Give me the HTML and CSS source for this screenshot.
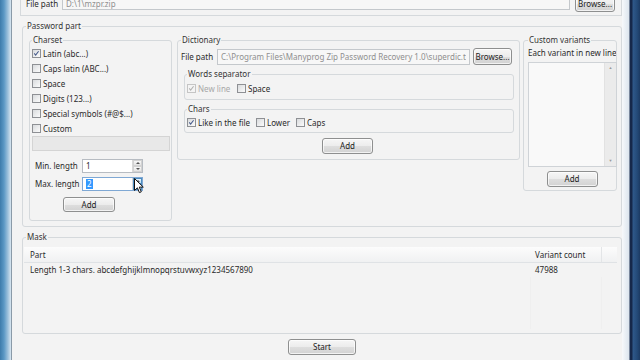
FILE: index.html
```html
<!DOCTYPE html>
<html lang="en">
<head>
    <meta charset="UTF-8">
    <title>Zip Password Recovery</title>
    <link rel="stylesheet" href="styles.css">
</head>
<body>
    <div class="window">
        <div class="frame-left"></div>
        <div class="main">
            <div class="filebox">
                <div class="filerow">
                    <span class="label path-label">File path</span>
                    <input class="text readonly top-path" type="text" value="D:\1\mzpr.zip" readonly>
                    <button class="btn browse">Browse...</button>
                </div>
            </div>

            <fieldset class="group password">
                <legend>Password part</legend>
                <div class="password-body">
                    <fieldset class="group charset">
                        <legend class="charset-legend">Charset</legend>
                        <div class="charset-body">
                            <div class="check"><span class="box checked"><svg viewBox="0 0 9 9"><path d="M1.6 4.4 L3.4 6.6 L7.2 1.6" /></svg></span>Latin (abc...)</div>
                            <div class="check"><span class="box"></span>Caps latin (ABC...)</div>
                            <div class="check"><span class="box"></span>Space</div>
                            <div class="check"><span class="box"></span>Digits (123...)</div>
                            <div class="check"><span class="box"></span>Special symbols (#@$...)</div>
                            <div class="check"><span class="box"></span>Custom</div>
                            <div class="custom-text"></div>
                            <div class="spinrow">
                                <span class="spin-label">Min. length</span>
                                <div class="spin">
                                    <span class="spin-value">1</span>
                                    <span class="spin-arrows"><span class="arr up"></span><span class="arr down"></span></span>
                                </div>
                            </div>
                            <div class="spinrow second">
                                <span class="spin-label">Max. length</span>
                                <div class="spin focused">
                                    <span class="spin-value"><span class="selected">2</span></span>
                                    <span class="spin-arrows"><span class="arr up hot"></span><span class="arr down hot"></span></span>
                                </div>
                            </div>
                            <button class="btn add charset-add">Add</button>
                        </div>
                    </fieldset>

                    <fieldset class="group dictionary">
                        <legend>Dictionary</legend>
                        <div class="dictionary-body">
                            <div class="dict-row">
                                <span class="label dict-label">File path</span>
                                <input class="text readonly dict-path" type="text" value="C:\Program Files\Manyprog Zip Password Recovery 1.0\superdic.txt" readonly>
                                <button class="btn browse">Browse...</button>
                            </div>
                            <fieldset class="group sub">
                                <legend class="sub-legend">Words separator</legend>
                                <div class="sub-body words">
                                    <div class="check disabled w-newline"><span class="box checked"><svg viewBox="0 0 9 9"><path d="M1.6 4.4 L3.4 6.6 L7.2 1.6" /></svg></span>New line</div>
                                    <div class="check"><span class="box"></span>Space</div>
                                </div>
                            </fieldset>
                            <fieldset class="group sub">
                                <legend class="sub-legend">Chars</legend>
                                <div class="sub-body chars">
                                    <div class="check w-like"><span class="box checked"><svg viewBox="0 0 9 9"><path d="M1.6 4.4 L3.4 6.6 L7.2 1.6" /></svg></span>Like in the file</div>
                                    <div class="check w-lower"><span class="box"></span>Lower</div>
                                    <div class="check"><span class="box"></span>Caps</div>
                                </div>
                            </fieldset>
                            <button class="btn add dict-add">Add</button>
                        </div>
                    </fieldset>

                    <fieldset class="group custom">
                        <legend class="custom-legend">Custom variants</legend>
                        <div class="custom-body">
                            <div class="hint">Each variant in new line</div>
                            <div class="textarea">
                                <div class="scrollbar">
                                    <span class="sarr">&#9650;</span>
                                    <span class="sarr">&#9660;</span>
                                </div>
                            </div>
                            <button class="btn add custom-add">Add</button>
                        </div>
                    </fieldset>
                </div>
            </fieldset>

            <fieldset class="group mask">
                <legend>Mask</legend>
                <div class="mask-body">
                    <div class="list">
                        <div class="list-head">
                            <div class="col-part">Part</div>
                            <div class="col-count">Variant count</div>
                            <div class="col-fill"></div>
                        </div>
                        <div class="list-row">
                            <div class="col-part">Length 1-3 chars. abcdefghijklmnopqrstuvwxyz1234567890</div>
                            <div class="col-count">47988</div>
                            <div class="col-fill"></div>
                        </div>
                        <div class="list-rest">
                            <div class="col-part"></div>
                            <div class="col-count"></div>
                            <div class="col-fill"></div>
                        </div>
                    </div>
                </div>
            </fieldset>

            <button class="btn start">Start</button>
        </div>
        <div class="frame-right"></div>
    </div>

    <svg class="cursor" width="12" height="16" viewBox="0 0 12 16">
        <path d="M0.5 0.5 L0.5 12.5 L3.4 9.8 L5.4 14.6 L7.3 13.8 L5.3 9.1 L9.3 9.1 Z" fill="#fff" stroke="#111" stroke-width="1"/>
    </svg>
</body>
</html>
```

FILE: styles.css
```css
* {
    box-sizing: border-box;
}
html, body {
    margin: 0;
    height: 100%;
    overflow: hidden;
}
body {
    position: relative;
    font-family: "Noto Sans", "Open Sans", sans-serif;
    font-size: 8px;
    line-height: 12px;
    color: #2a2a2a;
    background: #f2f2f2;
}
.window {
    display: flex;
    width: 640px;
    height: 360px;
}
.frame-left {
    width: 12px;
    flex: none;
    background: linear-gradient(to right, #3d7bab 0, #5b98c5 4px, #9fc2dd 8px, #d9e6f0 11px);
    border-right: 1px solid #8a9aa8;
}
.frame-right {
    width: 18px;
    flex: none;
    background: linear-gradient(to right, #f7f9fb 0, #dce5ee 7px, #16284a 8px, #16284a 10px, #2f5889 11px, #244a78 15px, #1c3a63 18px);
}
.main {
    flex: 1;
    display: flex;
    flex-direction: column;
    padding-left: 10px;
    background: #f3f3f3;
}
.main > * {
    flex: none;
}

/* buttons and inputs */
.btn {
    font: inherit;
    color: #222;
    padding: 0;
    border: 1px solid #8e8f8f;
    border-radius: 3px;
    background: linear-gradient(#f6f6f6 0%, #ececec 50%, #dedede 51%, #d2d2d2 100%);
    box-shadow: inset 0 0 0 1px rgba(255, 255, 255, 0.7);
    cursor: pointer;
}
.text {
    font: inherit;
    height: 16px;
    padding: 0 3px;
    border: 1px solid #c4c8cc;
    background: #fff;
    color: #333;
    outline: none;
}
.text.readonly {
    background: #f7f7f7;
    color: #8f8f8f;
}
.label {
    white-space: nowrap;
}

/* top file row */
.filebox {
    height: 16px;
    margin-left: -2px;
    border: 1px solid #d5d9dc;
    border-top: none;
    display: flex;
    align-items: flex-end;
    padding: 0 6px 3px 5px;
}
.filerow {
    flex: 1;
    height: 17px;
    display: flex;
    align-items: center;
}
.path-label {
    width: 36px;
}
.top-path {
    flex: 1;
    height: 12px;
}
.filerow .browse {
    width: 40px;
    height: 17px;
    margin-left: 5px;
}

/* group boxes */
.group {
    margin: 0;
    padding: 0;
    min-width: 0;
    border: 1px solid #d5d9dc;
    border-radius: 3px;
}
legend {
    padding: 0 1px;
    margin-left: 3px;
    height: 12px;
    line-height: 12px;
    color: #333;
}
.password {
    margin-top: 4px;
}
.password-body {
    display: flex;
    align-items: flex-start;
    padding: 2px 4px 5px 6px;
}

/* charset */
.charset {
    width: 143px;
    flex: none;
}
.charset-legend {
    margin-left: 2px;
}
.charset-body {
    display: flex;
    flex-direction: column;
    padding: 0 1px 8px 2px;
}
.check {
    display: flex;
    align-items: center;
    height: 15px;
    white-space: nowrap;
}
.box {
    width: 9px;
    height: 9px;
    margin-right: 2px;
    flex: none;
    border: 1px solid #8e9094;
    background: linear-gradient(135deg, #d9dbdd, #fbfbfb);
}
.box svg {
    display: block;
    width: 7px;
    height: 7px;
}
.box path {
    fill: none;
    stroke: #45598a;
    stroke-width: 1.3;
}
.check.disabled {
    color: #a8a8a8;
}
.check.disabled .box {
    border-color: #c5c5c5;
    background: #f4f4f4;
}
.check.disabled path {
    stroke: #b0b0b0;
}
.custom-text {
    height: 15px;
    background: #e8e8e8;
    border: 1px solid #d4d4d4;
}
.spinrow {
    display: flex;
    align-items: center;
    height: 14px;
    margin-top: 8px;
    padding-left: 3px;
}
.spinrow.second {
    margin-top: 4px;
}
.spin-label {
    width: 47px;
    white-space: nowrap;
}
.spin {
    width: 61px;
    height: 14px;
    display: flex;
    border: 1px solid #b7bcc2;
    background: #fff;
}
.spin.focused {
    border-color: #7fa8d4;
}
.spin-value {
    flex: 1;
    padding-left: 3px;
    line-height: 12px;
}
.selected {
    display: inline-block;
    background: #3399ff;
    color: #fff;
    padding: 0 1px;
    line-height: 10px;
}
.spin-arrows {
    width: 10px;
    display: flex;
    flex-direction: column;
    border-left: 1px solid #d8d8d8;
}
.arr {
    flex: 1;
    position: relative;
    background: linear-gradient(#f7f7f7, #e4e4e4);
    border: 1px solid #d2d2d2;
}
.arr.hot {
    background: linear-gradient(#e8f4fc, #b9ddf6);
    border-color: #4d8cc0;
}
.arr::after {
    content: "";
    position: absolute;
    left: 2px;
    top: 1px;
    border-left: 2px solid transparent;
    border-right: 2px solid transparent;
}
.arr.up::after {
    border-bottom: 2px solid #555;
}
.arr.down::after {
    border-top: 2px solid #555;
}
.charset-add {
    width: 52px;
    height: 15px;
    margin: 6px 0 0 31px;
}

/* dictionary */
.dictionary {
    width: 343px;
    flex: none;
    margin-left: 5px;
}
.dictionary-body {
    display: flex;
    flex-direction: column;
    padding: 2px 5px 5px 3px;
}
.dict-row {
    display: flex;
    align-items: center;
    height: 17px;
}
.dict-label {
    width: 36px;
}
.dict-path {
    width: 253px;
    overflow: hidden;
}
.dict-row .browse {
    width: 39px;
    height: 17px;
    margin-left: 3px;
}
.sub {
    margin: 3px 0 0 3px;
}
.sub-legend {
    margin-left: 2px;
}
.sub-body {
    display: flex;
    padding: 1px 0 3px 2px;
}
.sub-body.chars {
    padding: 0 0 2px 2px;
}
.w-newline {
    width: 50px;
}
.w-like {
    width: 69px;
}
.w-lower {
    width: 40px;
}
.dict-add {
    align-self: center;
    width: 51px;
    height: 16px;
    margin-top: 5px;
}

/* custom variants */
.custom {
    width: 94px;
    flex: none;
    margin-left: 3px;
}
.custom-legend {
    margin-left: 4px;
    white-space: nowrap;
}
.custom-body {
    display: flex;
    flex-direction: column;
    padding: 1px 0 3px 4px;
}
.hint {
    white-space: nowrap;
    overflow: hidden;
}
.textarea {
    height: 105px;
    margin: 3px -1px 0 0;
    border: 1px solid #cfd3d7;
    background: #f9f9f9;
    display: flex;
    justify-content: flex-end;
}
.scrollbar {
    width: 12px;
    display: flex;
    flex-direction: column;
    justify-content: space-between;
    align-items: center;
    background: #ebebeb;
    border-left: 1px solid #e2e2e2;
}
.sarr {
    font-size: 4px;
    line-height: 10px;
    color: #9a9a9a;
}
.custom-add {
    align-self: center;
    width: 51px;
    height: 16px;
    margin-top: 4px;
}

/* mask */
.mask {
    margin-top: 4px;
}
.mask-body {
    padding: 4px 4px 4px 1px;
}
.list {
    height: 82px;
    display: flex;
    flex-direction: column;
}
.list-head, .list-row, .list-rest {
    display: flex;
    flex: none;
}
.list-head {
    height: 16px;
    line-height: 15px;
    background: linear-gradient(#fcfcfc, #f0f1f2);
    border-bottom: 1px solid #dfe2e5;
}
.list-row {
    height: 14px;
    line-height: 14px;
}
.list-rest {
    flex: 1;
}
.col-part {
    width: 506px;
    padding-left: 6px;
    white-space: nowrap;
}
.col-count {
    width: 72px;
    padding-left: 5px;
}
.col-fill {
    flex: 1;
}
.list-head .col-count {
    border-right: 1px solid #e3e5e7;
}
.list-rest .col-count {
    border-left: 1px solid #efefef;
    border-right: 1px solid #efefef;
}
.start {
    align-self: center;
    width: 68px;
    height: 16px;
    margin-top: 5px;
}

/* mouse pointer over the spin box */
.cursor {
    position: absolute;
    left: 134px;
    top: 178px;
}
```
